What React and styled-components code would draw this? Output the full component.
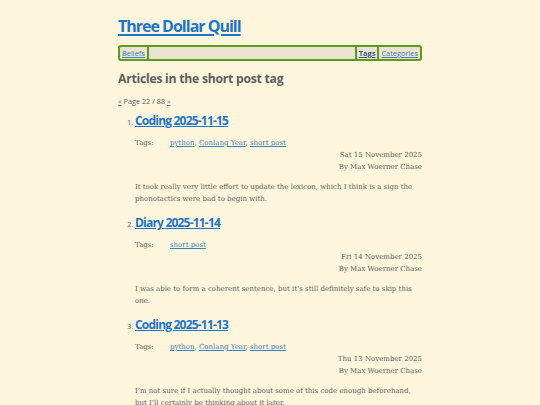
import React from "react";
import styled, { createGlobalStyle } from "styled-components";

const GlobalStyle = createGlobalStyle`
  body {
    margin: 0;
    background: #fdf5dc;
    color: #606060;
    font-family: "DejaVu Serif", serif;
  }
`;

const posts = [
  {
    title: "Coding 2025-11-15",
    tags: ["python", "Conlang Year", "short post"],
    date: "Sat 15 November 2025",
    summary:
      "It took really very little effort to update the lexicon, which I think is a sign the phonotactics were bad to begin with.",
  },
  {
    title: "Diary 2025-11-14",
    tags: ["short post"],
    date: "Fri 14 November 2025",
    summary:
      "I was able to form a coherent sentence, but it\u2019s still definitely safe to skip this one.",
  },
  {
    title: "Coding 2025-11-13",
    tags: ["python", "Conlang Year", "short post"],
    date: "Thu 13 November 2025",
    summary:
      "I\u2019m not sure if I actually thought about some of this code enough beforehand, but I\u2019ll certainly be thinking about it later.",
  },
];

function App() {
  return (
    <>
      <GlobalStyle />
      <Page>
        <SiteTitle href="#">Three Dollar Quill</SiteTitle>
        <Nav>
          <NavLink href="#">Beliefs</NavLink>
          <Spacer />
          <NavLink href="#" $active>
            Tags
          </NavLink>
          <NavLink href="#" $sep>
            Categories
          </NavLink>
        </Nav>
        <Heading>Articles in the short post tag</Heading>
        <Pager>
          <a href="#">«</a> Page 22 / 88 <a href="#">»</a>
        </Pager>
        <PostList>
          {posts.map((post) => (
            <Post key={post.title}>
              <PostTitle href="#">{post.title}</PostTitle>
              <TagRow>
                <span>Tags:</span>
                <span>
                  {post.tags.map((tag, i) => (
                    <React.Fragment key={tag}>
                      <TagLink href="#">{tag}</TagLink>
                      {i < post.tags.length - 1 && ", "}
                    </React.Fragment>
                  ))}
                </span>
              </TagRow>
              <Byline>
                <div>{post.date}</div>
                <div>By Max Woerner Chase</div>
              </Byline>
              <Summary>{post.summary}</Summary>
            </Post>
          ))}
        </PostList>
      </Page>
    </>
  );
}

export default App;

const Page = styled.div`
  width: 304px;
  margin: 0 auto;
  padding-top: 14px;
`;

const SiteTitle = styled.a`
  display: inline-block;
  font-family: "Open Sans", sans-serif;
  font-weight: 700;
  font-size: 16px;
  letter-spacing: -1px;
  color: #1d75c8;
  text-decoration: underline;
  text-decoration-thickness: 1.5px;
  text-underline-offset: 2px;
  line-height: 24px;
  margin-bottom: 7px;
`;

const Nav = styled.nav`
  display: flex;
  align-items: stretch;
  height: 12px;
  border: 2px solid #5e9a1c;
  border-radius: 3px;
  background: #e9e3cf;
  font-family: "Open Sans", sans-serif;
  font-size: 7.4px;
  line-height: 12px;
`;

const NavLink = styled.a`
  padding: 0 2px;
  color: ${(p) => (p.$active ? "#3a5f8f" : "#3f7fc0")};
  font-weight: ${(p) => (p.$active ? 700 : 400)};
  border-left: ${(p) => (p.$active || p.$sep ? "2px solid #5e9a1c" : "none")};
  text-decoration: underline;
`;

const Spacer = styled.span`
  flex: 1;
  border-left: 2px solid #5e9a1c;
`;

const Heading = styled.h2`
  margin: 9px 0 0;
  font-family: "Open Sans", sans-serif;
  font-size: 12.2px;
  font-weight: 700;
  letter-spacing: -0.25px;
  color: #5e5e5e;
  line-height: 18px;
`;

const Pager = styled.div`
  margin-top: 8px;
  font-family: "Open Sans", sans-serif;
  font-size: 7.3px;
  line-height: 10px;

  a {
    color: #3f7fc0;
  }
`;

const PostList = styled.ol`
  margin: 5px 0 0;
  padding-left: 17px;
  font-family: "Open Sans", sans-serif;
  font-size: 7px;
`;

const Post = styled.li`
  margin-bottom: 8px;
`;

const PostTitle = styled.a`
  display: inline-block;
  font-family: "Open Sans", sans-serif;
  font-size: 12px;
  font-weight: 700;
  letter-spacing: -0.8px;
  color: #1d75c8;
  line-height: 20px;
  text-decoration-thickness: 1px;
`;

const TagRow = styled.div`
  display: grid;
  grid-template-columns: 35px auto;
  margin-top: 6px;
  font-family: "DejaVu Serif", serif;
  font-size: 7px;
  line-height: 12px;
`;

const TagLink = styled.a`
  color: #3f7fc0;
`;

const Byline = styled.div`
  text-align: right;
  font-family: "DejaVu Serif", serif;
  font-size: 7px;
  line-height: 12px;
`;

const Summary = styled.p`
  margin: 8px 0 0;
  font-family: "DejaVu Serif", serif;
  font-size: 7px;
  line-height: 12px;
`;
